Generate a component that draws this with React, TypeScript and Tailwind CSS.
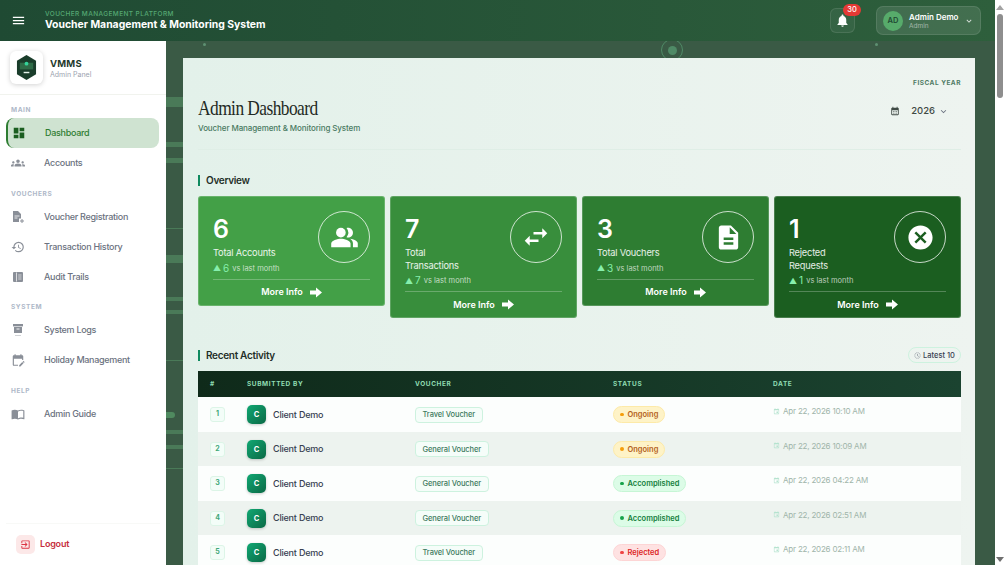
import type { ComponentType } from 'react';
import {
  MdCalendarMonth,
  MdCancel,
  MdDashboard,
  MdDescription,
  MdEditCalendar,
  MdEvent,
  MdExitToApp,
  MdExpandMore,
  MdGroups,
  MdHistory,
  MdHistoryToggleOff,
  MdMenu,
  MdNotifications,
  MdOutlineImportContacts,
  MdPeopleAlt,
  MdSwapHoriz,
} from 'react-icons/md';

type IconProps = { size?: number; className?: string };

// the three sidebar glyphs that the icon packs don't have in this shape
function VoucherAddIcon({ size, className }: IconProps) {
  return (
    <svg width={size} height={size} viewBox="0 0 14 14" className={className} fill="currentColor">
      <path d="M2 1h5l3 3v4.5H8V12H2z" />
      <path d="M3.5 6h5M3.5 8h3" stroke="#fff" strokeWidth="0.8" />
      <path d="M11 9v4M9 11h4" stroke="currentColor" strokeWidth="1" />
    </svg>
  );
}

function AuditIcon({ size, className }: IconProps) {
  return (
    <svg width={size} height={size} viewBox="0 0 14 14" className={className} fill="currentColor">
      <rect x="2" y="2" width="10" height="10" rx="1" />
      <path d="M5.5 2.5v9" stroke="#fff" strokeWidth="0.7" />
      <path d="M7.2 5h3.3M7.2 7h3.3M7.2 9h3.3" stroke="#fff" strokeWidth="0.6" />
    </svg>
  );
}

function LogsIcon({ size, className }: IconProps) {
  return (
    <svg width={size} height={size} viewBox="0 0 14 14" className={className} fill="currentColor">
      <rect x="2" y="1" width="10" height="2.4" />
      <path d="M3 4h8v6H3z" />
      <path d="M5.5 6h3" stroke="#fff" strokeWidth="0.9" />
      <path d="M4.5 12.5h1M6.5 12.5h1M8.5 12.5h1" stroke="currentColor" strokeWidth="0.8" />
    </svg>
  );
}

function BlockArrow() {
  return (
    <svg width="12" height="11" viewBox="0 0 12 11" fill="white">
      <path d="M0 3.5h6V0.5L12 5.5 6 10.5V7.5H0z" />
    </svg>
  );
}

type NavItem = { label: string; icon: ComponentType<IconProps>; active?: boolean };

const navSections: { title: string; items: NavItem[] }[] = [
  { title: 'MAIN', items: [{ label: 'Dashboard', icon: MdDashboard, active: true }, { label: 'Accounts', icon: MdGroups }] },
  {
    title: 'VOUCHERS',
    items: [
      { label: 'Voucher Registration', icon: VoucherAddIcon },
      { label: 'Transaction History', icon: MdHistory },
      { label: 'Audit Trails', icon: AuditIcon },
    ],
  },
  { title: 'SYSTEM', items: [{ label: 'System Logs', icon: LogsIcon }, { label: 'Holiday Management', icon: MdEditCalendar }] },
  { title: 'HELP', items: [{ label: 'Admin Guide', icon: MdOutlineImportContacts }] },
];

const stats = [
  { value: '6', label: 'Total Accounts', bg: 'bg-[#43a047]', icon: <MdPeopleAlt size={29} /> },
  { value: '7', label: 'Total Transactions', bg: 'bg-[#388e3c]', icon: <MdSwapHoriz size={30} /> },
  { value: '3', label: 'Total Vouchers', bg: 'bg-[#2e7d32]', icon: <MdDescription size={29} /> },
  { value: '1', label: 'Rejected Requests', bg: 'bg-[#1b5e20]', icon: <MdCancel size={29} /> },
];

const rows = [
  { voucher: 'Travel Voucher', status: 'Ongoing', date: 'Apr 22, 2026 10:10 AM' },
  { voucher: 'General Voucher', status: 'Ongoing', date: 'Apr 22, 2026 10:09 AM' },
  { voucher: 'General Voucher', status: 'Accomplished', date: 'Apr 22, 2026 04:22 AM' },
  { voucher: 'General Voucher', status: 'Accomplished', date: 'Apr 22, 2026 02:51 AM' },
  { voucher: 'Travel Voucher', status: 'Rejected', date: 'Apr 22, 2026 02:11 AM' },
];

const statusStyles: Record<string, { pill: string; dot: string }> = {
  Ongoing: { pill: 'bg-[#fef3c7] border-[#fdeaa8] text-[#b45f1a]', dot: 'bg-[#f59e0b]' },
  Accomplished: { pill: 'bg-[#dcfce7] border-[#c6f6d5] text-[#15803d]', dot: 'bg-[#16a34a]' },
  Rejected: { pill: 'bg-[#fee2e2] border-[#fdd5d5] text-[#dc2626]', dot: 'bg-[#ef4444]' },
};

const bands = [
  'top-[56px] h-[10px]',
  'top-[101px] h-[5px]',
  'top-[117px] h-[5px]',
  'top-[187px] h-px',
  'top-[214px] h-[8px]',
  'top-[256px] h-[4px]',
  'top-[269px] h-[4px]',
  'top-[319px] h-px',
  'top-[389px] h-[4px]',
  'top-[404px] h-[4px]',
  'top-[427px] h-px',
];

const tableCols = 'grid grid-cols-[49px_168px_198px_160px_1fr]';

function Logo() {
  return (
    <svg width="21" height="25" viewBox="0 0 22 26">
      <path d="M11 0 L21 6 V20 L11 26 L1 20 V6 Z" fill="#1a3d2b" />
      <rect x="4" y="8" width="14" height="7" fill="#2f6b47" />
      <circle cx="11" cy="9" r="2" fill="#34d399" />
      <rect x="8" y="17.5" width="6" height="1.5" fill="#e5f3ea" />
    </svg>
  );
}

function Sidebar() {
  return (
    <aside className="w-[166px] shrink-0 bg-white flex flex-col relative z-10">
      <div className="h-[54px] shrink-0 border-b border-[#f1f3ee] flex items-center pl-[10px] gap-[7px]">
        <div className="w-[33px] h-[33px] rounded-[6px] bg-white shadow-[0_1px_5px_rgba(0,0,0,0.18)] flex items-center justify-center">
          <Logo />
        </div>
        <div className="pt-[2px]">
          <div className="text-[9.5px] leading-[12px] font-bold text-[#1f3a2c] tracking-[0.2px]">VMMS</div>
          <div className="text-[7px] leading-[9px] text-[#9ca3af]">Admin Panel</div>
        </div>
      </div>
      <nav className="flex flex-col gap-[9.5px] pt-[9px]">
        {navSections.map((section) => (
          <div key={section.title}>
            <div className="h-3 mb-[2px] pl-[11px] text-[6.5px] leading-[12px] font-bold tracking-[0.6px] text-[#aeb8c8]">{section.title}</div>
            {section.items.map((item) =>
              item.active ? (
                <div key={item.label} className="h-[30px] ml-[6px] mr-[7px] rounded-[8px] border-l-2 border-[#2e7d32] bg-[#cfe3d1] flex items-center text-[#2e7d32]">
                  <item.icon size={14} className="ml-[4px] text-[#1b5e20]" />
                  <span className="ml-[19px] text-[9px] tracking-[-0.3px] font-medium">{item.label}</span>
                </div>
              ) : (
                <div key={item.label} className="h-[30px] flex items-center text-[#6b7280]">
                  <span className="w-[14px] ml-[11px] flex justify-center">
                    <item.icon size={14} className="text-[#8a8f98]" />
                  </span>
                  <span className="ml-[19px] text-[9px] tracking-[-0.3px] font-medium">{item.label}</span>
                </div>
              ),
            )}
          </div>
        ))}
      </nav>
      <div className="mt-auto mb-[1px] mx-[6px] border-t border-[#f8f9f7] h-[41px] flex items-center pl-[10px] gap-[5px]">
        <div className="w-[19px] h-[19px] rounded-[5px] bg-[#fce8e8] flex items-center justify-center">
          <MdExitToApp size={11} className="text-[#dc3545]" />
        </div>
        <span className="text-[9px] tracking-[-0.2px] font-semibold text-[#c62e3d]">Logout</span>
      </div>
    </aside>
  );
}

function Background() {
  return (
    <>
      {bands.map((band) => (
        <div key={band} className={`absolute left-0 w-[17px] bg-[#4a7a58] ${band}`} />
      ))}
      <div className="absolute left-0 top-[371px] w-[9px] h-[6px] rounded-r-full bg-[#4f8a5f]" />
      <div className="absolute left-[37px] top-[2px] w-[3px] h-[3px] rounded-full bg-[#5e9072]" />
      <div className="absolute left-[709px] top-[2px] w-[3px] h-[3px] rounded-full bg-[#5e9072]" />
      <div className="absolute left-[495px] top-[-2px] w-[22px] h-[22px] rounded-full border border-[#4f8a66] flex items-center justify-center">
        <div className="w-[9px] h-[9px] rounded-full bg-[#4f8a66]" />
      </div>
    </>
  );
}

function StatCard({ stat }: { stat: (typeof stats)[number] }) {
  return (
    <div className={`${stat.bg} rounded-[3px] border border-white/20 px-[14px] pt-[14px] text-white`}>
      <div className="flex justify-between items-start">
        <div>
          <div className="h-[36px] text-[25px] leading-[36px] font-semibold">{stat.value}</div>
          <div className="max-w-[70px] text-[9.25px] tracking-[-0.2px] leading-[12.7px] text-white/90">{stat.label}</div>
          <div className="h-[13px] mt-[2px] flex items-center">
            <span className="text-[8px] text-[#86efac]">▲</span>
            <span className="ml-[2px] text-[10px] text-[#86efac]">{stat.value}</span>
            <span className="ml-[3px] text-[7.5px] text-white/70">vs last month</span>
          </div>
        </div>
        <div className="w-[52px] h-[52px] rounded-full border border-white/75 flex items-center justify-center">{stat.icon}</div>
      </div>
      <div className="mt-[4px] border-t border-white/25 h-[26px] flex items-center justify-center gap-[7px] text-[9px] font-semibold">
        More Info
        <BlockArrow />
      </div>
    </div>
  );
}

function SectionTitle({ title }: { title: string }) {
  return (
    <div className="flex items-center gap-[6px]">
      <div className="w-[2px] h-[11px] bg-[#0f8a5f]" />
      <h2 className="text-[10px] tracking-[-0.3px] font-semibold text-[#1f2f28]">{title}</h2>
    </div>
  );
}

function ActivityRow({ row, index }: { row: (typeof rows)[number]; index: number }) {
  const status = statusStyles[row.status];
  return (
    <div className={`${tableCols} h-[34.5px] items-center ${index % 2 ? 'bg-[#edf3ef]' : 'bg-[#fcfefd]'}`}>
      <div className="pl-[12px]">
        <div className="w-[15px] h-[15px] rounded-[3px] border border-[#dcf5e7] bg-[#f3fdf8] flex items-center justify-center text-[7px] font-bold text-[#3fa878]">{index + 1}</div>
      </div>
      <div className="flex items-center gap-[7px]">
        <div className="w-[19px] h-[19px] rounded-[5px] bg-gradient-to-br from-[#10a873] to-[#0b6a46] shadow-[0_1px_3px_rgba(0,0,0,0.2)] flex items-center justify-center text-[7.5px] font-bold text-white">C</div>
        <span className="text-[9px] tracking-[-0.2px] font-medium text-[#374151]">Client Demo</span>
      </div>
      <div className="flex">
        <span className="h-[16px] flex items-center px-[6.5px] rounded-[4px] border border-[#cdf2df] bg-[#f5fdf9] text-[7.5px] tracking-[-0.1px] font-medium text-[#3d7a5e]">{row.voucher}</span>
      </div>
      <div className="flex">
        <span className={`flex items-center gap-[4px] h-[17px] px-[6px] rounded-full border text-[7.5px] font-semibold ${status.pill}`}>
          <span className={`w-[3.5px] h-[3.5px] rounded-full ${status.dot}`} />
          {row.status}
        </span>
      </div>
      <div className="flex items-center gap-[3px] mb-[7px] text-[8px] tracking-[-0.2px] text-[#a0b5aa]">
        <MdEvent size={7} className="text-[#b5e3cf]" />
        {row.date}
      </div>
    </div>
  );
}

function Scrollbar() {
  return (
    <div className="w-[10px] shrink-0 bg-white flex flex-col items-center relative z-10">
      <div className="h-[14px] flex items-center">
        <div className="w-0 h-0 border-x-[4px] border-x-transparent border-b-[5px] border-b-[#a3a3a3]" />
      </div>
      <div className="w-[6px] h-[84px] rounded-full bg-[#8e8e8e]" />
      <div className="mt-auto h-[12px] flex items-center">
        <div className="w-0 h-0 border-x-[4px] border-x-transparent border-t-[5px] border-t-[#6f6f6f]" />
      </div>
    </div>
  );
}

export default function App() {
  return (
    <div className="w-[1005px] h-[565px] flex overflow-hidden font-['Inter',sans-serif]">
      <div className="flex-1 min-w-0 flex flex-col">
        <header className="h-[41px] shrink-0 bg-gradient-to-r from-[#1f4a33] to-[#2e5f3c] flex items-center pl-[11px] pr-[14px]">
          <MdMenu size={15} className="text-white" />
          <div className="ml-[19px]">
            <div className="text-[6.5px] leading-[9px] font-medium tracking-[0.4px] text-[#55a873]">VOUCHER MANAGEMENT PLATFORM</div>
            <div className="text-[10.4px] leading-[12px] font-bold text-white">Voucher Management &amp; Monitoring System</div>
          </div>
          <div className="ml-auto relative w-[25px] h-[25px] rounded-[6px] border border-white/10 bg-white/5 flex items-center justify-center">
            <MdNotifications size={15} className="text-white" />
            <span className="absolute top-[-5px] left-[12px] w-[18px] h-[12px] rounded-full bg-[#e53935] text-[7.5px] leading-[12px] text-center font-medium text-white">30</span>
          </div>
          <div className="ml-[21px] w-[105px] h-[29px] rounded-[7px] border border-white/10 bg-white/10 flex items-center pl-[6px]">
            <div className="w-[20px] h-[20px] rounded-full bg-[#57ab6b] flex items-center justify-center text-[7.5px] font-semibold text-[#1f4a33]">AD</div>
            <div className="ml-[6px]">
              <div className="text-[8px] leading-[10px] font-semibold text-white">Admin Demo</div>
              <div className="text-[6.5px] leading-[8px] text-white/50">Admin</div>
            </div>
            <MdExpandMore size={10} className="ml-[6px] text-white/80" />
          </div>
        </header>
        <div className="flex-1 min-h-0 flex">
          <Sidebar />
          <main className="flex-1 min-w-0 relative bg-[#3a5a45] overflow-hidden pl-[17px] pt-[17px] pr-[20px]">
            <Background />
            <div className="relative h-[600px] bg-gradient-to-r from-[#e3f1ea] to-[#eef4f0] pl-[15px] pr-[14px]">
              <div className="pt-[21px] text-right text-[6.5px] leading-[9px] font-bold tracking-[0.5px] text-[#4f7a64]">FISCAL YEAR</div>
              <div className="flex justify-between border-b border-[#dfeee6] h-[60px] mt-[2px]">
                <div className="pt-[4px]">
                  <h1 className="h-[27px] origin-left scale-x-[0.79] text-[22px] leading-[27px] font-['Liberation_Serif',serif] tracking-[-0.7px] text-[#1f2a24] whitespace-nowrap">Admin Dashboard</h1>
                  <p className="mt-[1px] text-[8px] tracking-[-0.1px] leading-[12px] font-medium text-[#4a7a62]">Voucher Management &amp; Monitoring System</p>
                </div>
                <div className="flex items-center h-[42px] pr-[12px] text-[#3f4a45]">
                  <MdCalendarMonth size={10} />
                  <span className="ml-[11px] text-[9.5px] font-medium">2026</span>
                  <MdExpandMore size={11} className="ml-[3px] text-[#6b7280]" />
                </div>
              </div>
              <div className="mt-[23px]">
                <SectionTitle title="Overview" />
              </div>
              <div className="mt-[8px] grid grid-cols-4 gap-[5px] items-start">
                {stats.map((stat) => (
                  <StatCard key={stat.label} stat={stat} />
                ))}
              </div>
              <div className="mt-[29px] flex items-center justify-between h-[16px]">
                <SectionTitle title="Recent Activity" />
                <div className="h-[16px] w-[53px] rounded-full border border-[#cdf2df] flex items-center justify-center gap-[2px] text-[7.5px] font-medium text-[#374151]">
                  <MdHistoryToggleOff size={7} className="text-[#6b7280]" />
                  Latest 10
                </div>
              </div>
              <div className={`${tableCols} mt-[8px] h-[26px] items-center bg-gradient-to-r from-[#0f2a1a] to-[#1b4330] text-[6.5px] font-bold tracking-[0.6px] text-[#8fdcb2]`}>
                <div className="pl-[12px]">#</div>
                <div>SUBMITTED BY</div>
                <div>VOUCHER</div>
                <div>STATUS</div>
                <div>DATE</div>
              </div>
              {rows.map((row, index) => (
                <ActivityRow key={index} row={row} index={index} />
              ))}
            </div>
          </main>
        </div>
      </div>
      <Scrollbar />
    </div>
  );
}
